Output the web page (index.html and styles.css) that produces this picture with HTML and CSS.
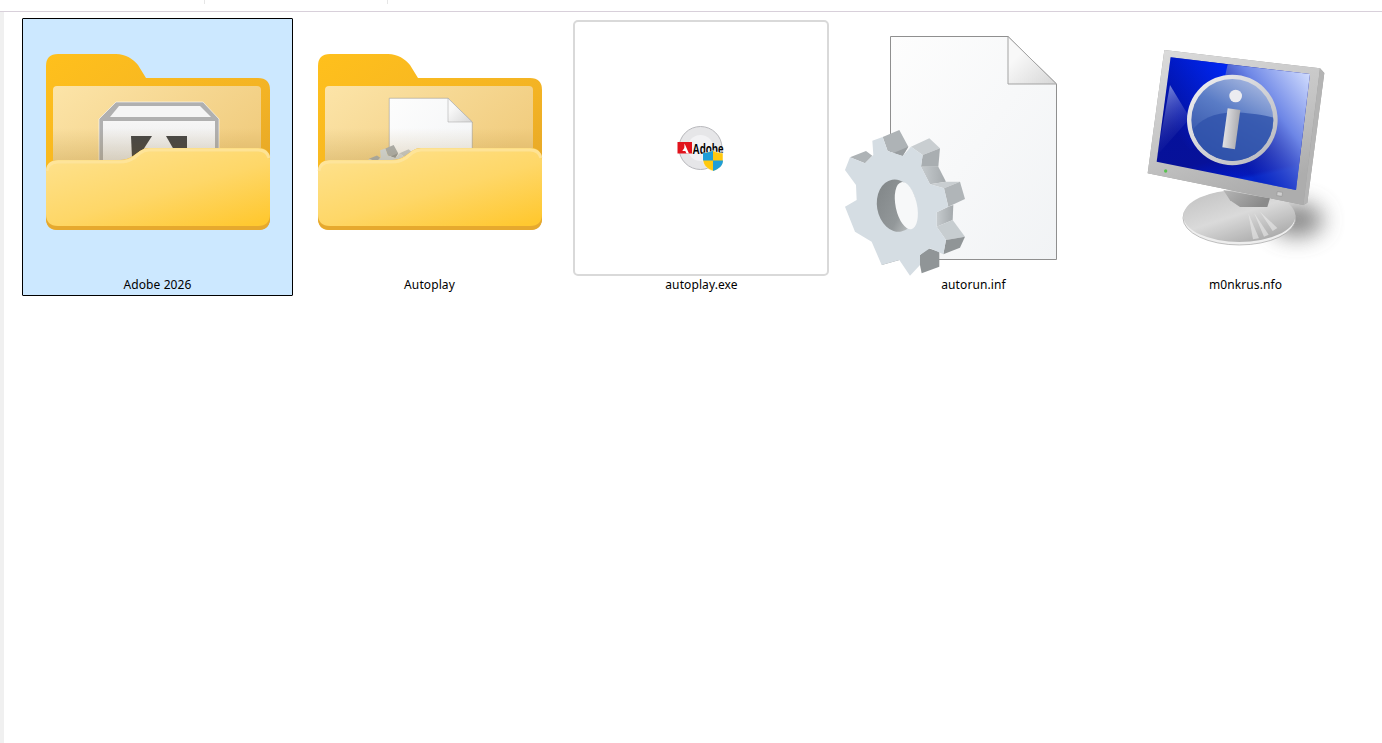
FILE: index.html
```html
<!DOCTYPE html>
<html lang="en">
<head>
  <meta charset="UTF-8" />
  <meta name="viewport" content="width=device-width, initial-scale=1" />
  <title>Adobe 2026 installer folder</title>
  <link rel="stylesheet" href="styles.css">
</head>
<body>
  <!-- shared gradients and shapes -->
  <svg class="sprite" aria-hidden="true">
    <defs>
      <linearGradient id="folderBack" x1="0" y1="0" x2="1" y2="1">
        <stop offset="0" stop-color="#ffc01c" />
        <stop offset="0.6" stop-color="#f3b324" />
        <stop offset="1" stop-color="#dc9f2c" />
      </linearGradient>
      <linearGradient id="folderPaper" x1="0" y1="0" x2="1" y2="0.5">
        <stop offset="0" stop-color="#fce4a8" />
        <stop offset="1" stop-color="#f1cd80" />
      </linearGradient>
      <linearGradient id="folderShade" x1="0" y1="0" x2="0" y2="1">
        <stop offset="0" stop-color="#8a5c00" stop-opacity="0" />
        <stop offset="1" stop-color="#8a5c00" stop-opacity="0.2" />
      </linearGradient>
      <linearGradient id="folderFront" x1="0.1" y1="0" x2="0.9" y2="1">
        <stop offset="0" stop-color="#fee28f" />
        <stop offset="0.55" stop-color="#fed768" />
        <stop offset="1" stop-color="#ffc830" />
      </linearGradient>
      <linearGradient id="pageFill" x1="0" y1="0" x2="1" y2="1">
        <stop offset="0" stop-color="#fdfdfd" />
        <stop offset="1" stop-color="#f1f3f5" />
      </linearGradient>
      <linearGradient id="foldFill" x1="0" y1="0" x2="1" y2="1">
        <stop offset="0.3" stop-color="#f8f8f8" />
        <stop offset="1" stop-color="#d6d6d6" />
      </linearGradient>
      <linearGradient id="holeFill" x1="0" y1="0" x2="1" y2="1">
        <stop offset="0" stop-color="#7f8486" />
        <stop offset="0.6" stop-color="#93989a" />
        <stop offset="1" stop-color="#d2d5d6" />
      </linearGradient>
      <linearGradient id="toothFill" x1="0" y1="0" x2="1" y2="0">
        <stop offset="0" stop-color="#c6cbce" />
        <stop offset="1" stop-color="#a4a9ac" />
      </linearGradient>
      <linearGradient id="bezelFill" x1="0" y1="0" x2="0.4" y2="1">
        <stop offset="0" stop-color="#dcdcdc" />
        <stop offset="0.6" stop-color="#c4c4c4" />
        <stop offset="1" stop-color="#adadad" />
      </linearGradient>
      <linearGradient id="screenFill" x1="0" y1="0" x2="0.25" y2="1">
        <stop offset="0" stop-color="#000f9e" />
        <stop offset="0.82" stop-color="#071199" />
        <stop offset="0.97" stop-color="#0018c4" />
        <stop offset="1" stop-color="#0030e6" />
      </linearGradient>
      <linearGradient id="screenTop" x1="0.2" y1="0.65" x2="0.85" y2="0">
        <stop offset="0" stop-color="#0026f0" stop-opacity="0" />
        <stop offset="1" stop-color="#0026f0" />
      </linearGradient>
      <linearGradient id="screenSheen" x1="0.95" y1="0" x2="0.1" y2="0.85">
        <stop offset="0" stop-color="#d5e0ff" />
        <stop offset="0.4" stop-color="#6d86e6" />
        <stop offset="0.85" stop-color="#0c1ca8" stop-opacity="0.5" />
        <stop offset="1" stop-color="#0c1ca8" stop-opacity="0" />
      </linearGradient>
      <linearGradient id="leftSheen" x1="0.2" y1="0" x2="0.5" y2="1">
        <stop offset="0" stop-color="#8c9ae2" stop-opacity="0.9" />
        <stop offset="1" stop-color="#1a22a2" stop-opacity="0" />
      </linearGradient>
      <linearGradient id="ringFill" x1="0" y1="0" x2="1" y2="1">
        <stop offset="0" stop-color="#f2f2f4" />
        <stop offset="1" stop-color="#b4b5bb" />
      </linearGradient>
      <linearGradient id="dialFill" x1="0.85" y1="0" x2="0.3" y2="1">
        <stop offset="0" stop-color="#aebde2" />
        <stop offset="0.45" stop-color="#5a7cc6" />
        <stop offset="1" stop-color="#2e4ea6" />
      </linearGradient>
      <linearGradient id="stemFill" x1="0" y1="0" x2="1" y2="0.2">
        <stop offset="0" stop-color="#efeff1" />
        <stop offset="1" stop-color="#a9a9ad" />
      </linearGradient>
      <linearGradient id="baseFill" x1="0.1" y1="0" x2="0.8" y2="1">
        <stop offset="0" stop-color="#c2c2c2" />
        <stop offset="0.5" stop-color="#dadada" />
        <stop offset="1" stop-color="#a6a6a6" />
      </linearGradient>
      <linearGradient id="neckFill" x1="0" y1="0" x2="1" y2="0.4">
        <stop offset="0" stop-color="#b5b5b5" />
        <stop offset="1" stop-color="#8a8a8a" />
      </linearGradient>
      <linearGradient id="boxFill" x1="0" y1="0" x2="0" y2="1">
        <stop offset="0" stop-color="#f6f6f6" />
        <stop offset="1" stop-color="#e4e4e4" />
      </linearGradient>
      <clipPath id="dialClip">
        <circle cx="307" cy="270" r="123" />
      </clipPath>
      <filter id="soft" x="-100%" y="-100%" width="300%" height="300%">
        <feGaussianBlur stdDeviation="34" />
      </filter>

      <g id="folder-back">
        <path d="M46 66q0-12 12-12h58c10 0 17 5 22 11l8 13h112q12 0 12 12v128q0 12-12 12H58q-12 0-12-12z" fill="url(#folderBack)" />
        <rect x="53" y="86" width="208" height="84" rx="4" fill="url(#folderPaper)" />
      </g>
      <g id="folder-front">
        <rect x="53" y="128" width="208" height="36" fill="url(#folderShade)" />
        <path d="M46 172q0-12 12-12h62q7 0 13-4l7-5q4-3 9-3h109q12 0 12 12v58q0 12-12 12H58q-12 0-12-12z" fill="#e6a92e" />
        <path d="M46 172q0-12 12-12h62q7 0 13-4l7-5q4-3 9-3h109q12 0 12 12v54q0 12-12 12H58q-12 0-12-12z" fill="url(#folderFront)" />
        <path d="M47 171q1-9 11-9h62q8 0 14-4l6-5q4-3 9-3h109q9 0 11 8" fill="none" stroke="#fee6a0" stroke-width="3" opacity="0.75" />
      </g>

      <g id="gear">
        <path d="M128 36l50-21 27 50-17 28-45-15zM30 97l48-19 19 14-22 23z" fill="#aeb3b6" />
        <path d="M160 84l45-19-17 28z" fill="#989da0" />
        <path d="M213 65l55-25 32 30-52 20z" fill="#c9ced1" />
        <path d="M248 90l52-20-5 55-52 0z" fill="#a9aeb1" />
        <path d="M243 125h52l23 45-48 8z" fill="url(#toothFill)" />
        <path d="M270 178l48-8 42 0-48 20z" fill="#c9ced1" />
        <path d="M312 190l48-20 15 52-50 23z" fill="#b0b5b8" />
        <path d="M290 262l35-17 15-5-2 45-48 20z" fill="url(#toothFill)" />
        <path d="M290 305l48-20 37 50-57 10z" fill="#c7cdd0" />
        <path d="M318 345l57-10-15 33-50 20z" fill="#909597" />
        <path d="M240 390l25-20 33 10v45l-53 20-5-25z" fill="#909597" />
        <path d="M125 420l25-32 28 17z" fill="#909597" />
        <path d="M97 47l31-11 15 42 45 15 25-28 35 25-5 35 27 53 42 12 13 55-35 17v43l28 40-8 43-40-18-30 20v30l-30 32-32-47-53 15-30-70-50-30-30-75 35-20-2-45-33-45 15-38 45 18 25-25z" fill="#d5dde3" />
        <ellipse cx="170" cy="242" rx="59" ry="79" transform="rotate(-10 170 242)" fill="url(#holeFill)" />
        <ellipse cx="199" cy="242" rx="32" ry="72" transform="rotate(-12 199 242)" fill="#f7f8f9" />
      </g>

      <g id="doc-gear">
        <path d="M890.500 36.500H1008L1056.500 84V259.500H890.500z" fill="url(#pageFill)" stroke="#8f8f8f" />
        <path d="M1008 36.500V84h48.500z" fill="url(#foldFill)" stroke="#a3a3a3" />
        <use href="#gear" transform="translate(840 125) scale(0.3333)" />
      </g>
    </defs>
  </svg>

  <div class="toolbar">
    <div class="tick tick-first"></div>
    <div class="tick tick-second"></div>
  </div>

  <div class="main">
    <div class="rail"></div>
    <div class="files">

      <div class="tile selected">
        <svg class="icon" viewBox="30 20 256 256">
          <use href="#folder-back" />
          <path d="M99 119l17-17h87l16 17v50H99z" fill="#b0b0b0" stroke="#fff" stroke-width="0.6" />
          <path d="M110 117l9-11h81l11 11z" fill="#f5f5f5" />
          <rect x="103" y="121" width="112" height="50" fill="url(#boxFill)" />
          <path d="M131 136h21l-9 14-11 8z" fill="#474747" />
          <path d="M166 136h21v24l-13-10z" fill="#474747" />
          <use href="#folder-front" />
        </svg>
        <div class="name">Adobe 2026</div>
      </div>

      <div class="tile">
        <svg class="icon" viewBox="30 20 256 256">
          <use href="#folder-back" />
          <use href="#doc-gear" transform="translate(-328 80) scale(0.5)" />
          <use href="#folder-front" />
        </svg>
        <div class="name">Autoplay</div>
      </div>

      <div class="tile">
        <svg class="icon" viewBox="574 20 256 256">
          <rect class="thumb" x="574" y="21" width="254" height="254" rx="4" />
          <circle cx="700.500" cy="148" r="21.500" fill="#e6e6e8" stroke="#b8b8bc" />
          <circle cx="700.500" cy="148" r="13" fill="#f2f2f4" />
          <rect x="677.500" y="142" width="14.500" height="11.500" fill="#e1131c" />
          <path d="M684.500 143.500l4.500 10h-2.500l-1.200-2.500h-3l2-3z" fill="#fff" />
          <text class="adobe" x="692.500" y="153.500" textLength="31" lengthAdjust="spacingAndGlyphs">Adobe</text>
          <path d="M713 150.500c2 1.500 6 2.500 10 2.500v7c0 5-4 9-10 11-6-2-10-6-10-11v-7c4 0 8-1 10-2.500z" fill="#ffc90e" stroke="#fff" stroke-width="0.5" />
          <path d="M713 150.500v10h-10v-7.500c4 0 8-1 10-2.500zM713 160.500h10c0 5-4 8.500-10 10.500z" fill="#1f9ed8" />
        </svg>
        <div class="name">autoplay.exe</div>
      </div>

      <div class="tile">
        <svg class="icon" viewBox="846 20 256 256">
          <use href="#doc-gear" />
        </svg>
        <div class="name">autorun.inf</div>
      </div>

      <div class="tile">
        <svg class="icon" viewBox="1118 20 256 256">
          <g transform="translate(1130 30) scale(0.3333)">
            <ellipse cx="500" cy="570" rx="80" ry="50" fill="#5f5f5f" opacity="0.75" filter="url(#soft)" />
            <ellipse cx="328" cy="564" rx="169" ry="81" fill="#eeeeee" stroke="#a0a0a0" stroke-width="2" />
            <ellipse cx="328" cy="558" rx="168" ry="78" fill="url(#baseFill)" />
            <path d="M355 550l14 78 18-3zM372 548l30 72 14-6zM390 545l38 58 14-9z" fill="#efefef" opacity="0.55" />
            <path d="M280 480l140 25-8 26-82 0-30-20z" fill="url(#neckFill)" />
            <path d="M103 60l467 55 13 14-51 389-12 7-467-95z" fill="#9c9c9c" />
            <path d="M103 60l467 55-50 410-467-95z" fill="url(#bezelFill)" />
            <path d="M570 115l13 14-51 389-12 7z" fill="#b4b4b4" />
            <path d="M122 82l418 50-42 348-418-85z" fill="url(#screenFill)" />
            <path d="M122 82l171 21-22 220-191 72z" fill="url(#screenTop)" />
            <path d="M293 103l247 29-42 348-218-44 -20-180z" fill="url(#screenSheen)" />
            <path d="M120 165l60 100-98 110z" fill="url(#leftSheen)" />
            <circle cx="307" cy="270" r="136" fill="url(#ringFill)" />
            <circle cx="307" cy="270" r="123" fill="url(#dialFill)" />
            <path d="M180 310c40-60 110-80 260-45v140H180z" fill="#2f52ab" opacity="0.8" clip-path="url(#dialClip)" />
            <circle cx="317" cy="198" r="19" fill="#ececf0" />
            <path d="M293 235l38 5-16 118-38-6z" fill="url(#stemFill)" />
            <circle cx="107" cy="423" r="5" fill="#58c24f" />
            <rect x="441" y="486" width="16" height="12" fill="#cfcfcf" stroke="#8f8f8f" stroke-width="1.500" transform="rotate(8 449 492)" />
          </g>
        </svg>
        <div class="name">m0nkrus.nfo</div>
      </div>

    </div>
  </div>
</body>
</html>
```

FILE: styles.css
```css
html, body {
  margin: 0;
  padding: 0;
  height: 100%;
  overflow: hidden;
  font-family: "Noto Sans", "Open Sans", sans-serif;
  background: #ffffff;
  color: #000000;
}

.sprite {
  position: absolute;
  width: 0;
  height: 0;
}

.toolbar {
  display: flex;
  height: 11px;
  border-bottom: 1px solid #d8d0da;
}

.tick {
  height: 4px;
  border-right: 1px solid #e6e6e6;
}

.tick-first {
  width: 204px;
}

.tick-second {
  width: 182px;
}

.main {
  display: flex;
  height: 731px;
}

.rail {
  width: 4px;
  background: #f0f0f0;
}

.files {
  display: flex;
  align-items: flex-start;
  gap: 1px;
  padding: 6px 0 0 18px;
}

.tile {
  width: 271px;
  height: 278px;
  box-sizing: border-box;
  border: 1px solid transparent;
  border-radius: 1px;
  padding-top: 1px;
}

.tile.selected {
  background: #cce8ff;
  border-color: #000000;
}

.icon {
  display: block;
  width: 256px;
  height: 256px;
  margin-left: 7px;
  overflow: visible;
}

.thumb {
  fill: #ffffff;
  stroke: #d9d9d9;
  stroke-width: 2;
}

.adobe {
  font-family: "Liberation Sans", sans-serif;
  font-size: 14px;
  font-weight: bold;
  fill: #000000;
}

.name {
  font-size: 12px;
  line-height: 17px;
  letter-spacing: 0.1px;
  text-align: center;
}
```
